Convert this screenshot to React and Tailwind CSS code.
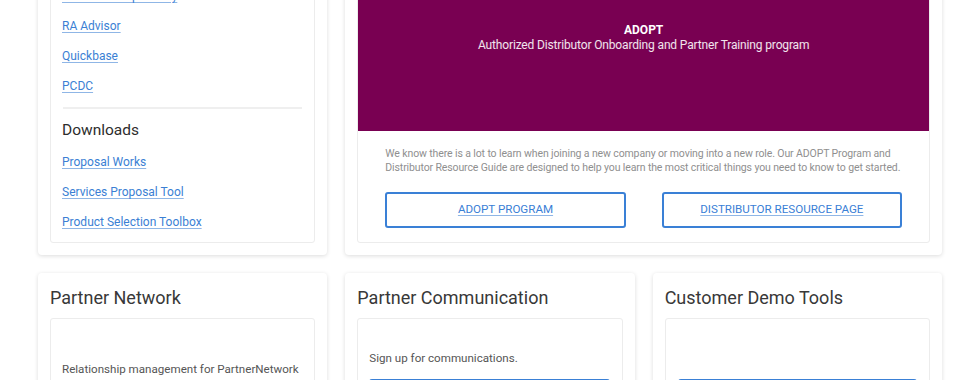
import React from "react";

const font = { fontFamily: "Roboto, 'Liberation Sans', sans-serif" };

function LinkRow({ children }) {
  return (
    <div className="h-[30px] flex items-center pl-[11px] pr-3">
      <a href="#" className="text-[12px] text-[#3b7fd4] underline decoration-[#8fb6e6] underline-offset-2 leading-none">
        {children}
      </a>
    </div>
  );
}

function Card({ className = "", children }) {
  return (
    <div className={"bg-white rounded-[4px] shadow-[0_1px_4px_rgba(0,0,0,0.14)] p-3 " + className}>
      {children}
    </div>
  );
}

function Inner({ className = "", children }) {
  return (
    <div className={"bg-white rounded-[3px] border border-[#ececec] " + className}>{children}</div>
  );
}

const btn =
  "h-[36px] flex items-center justify-center border-2 border-[#3a80d6] rounded-[3px] text-[11.6px] text-[#3a80d6] underline decoration-[#8fb6e6] underline-offset-2";

export default function App() {
  return (
    <div className="bg-white w-[980px] h-[380px] overflow-hidden" style={font}>
      <div className="px-[38px] -mt-[96px] grid grid-cols-3 gap-x-[18px] gap-y-[18px]">
        {/* Left card */}
        <Card>
          <Inner className="pt-2 pb-[5px]">
            <div className="pl-[11px] pr-3 h-[26px] flex items-center text-[15px] text-[#2d2d2d]">Tools</div>
            <LinkRow>Product Configurator</LinkRow>
            <LinkRow>Product Compatibility</LinkRow>
            <LinkRow>RA Advisor</LinkRow>
            <LinkRow>Quickbase</LinkRow>
            <LinkRow>PCDC</LinkRow>
            <div className="mx-3 mt-[6px] h-[2px] bg-[#efefef]" />
            <div className="pl-[11px] pr-3 pt-[9px] pb-[3px]">
              <div className="h-[26px] flex items-center text-[15.5px] text-[#2d2d2d]">Downloads</div>
            </div>
            <LinkRow>Proposal Works</LinkRow>
            <LinkRow>Services Proposal Tool</LinkRow>
            <LinkRow>Product Selection Toolbox</LinkRow>
          </Inner>
        </Card>

        {/* Middle wide card */}
        <Card className="col-span-2 flex flex-col">
          <Inner className="flex-1 flex flex-col overflow-hidden">
            <div className="flex-1 bg-[#790052] pt-[106px] text-center text-white">
              <div className="text-[12px] font-bold leading-[15px]">ADOPT</div>
              <div className="text-[12px] tracking-[-0.15px] leading-[15px] text-white/90">
                Authorized Distributor Onboarding and Partner Training program
              </div>
            </div>
            <div className="px-[27px] pt-[16px] pb-[14px]">
              <p className="text-[10.5px] tracking-[-0.12px] leading-[14px] text-[#8f8f8f] whitespace-nowrap">
                We know there is a lot to learn when joining a new company or moving into a new role. Our ADOPT Program and
                <br />
                Distributor Resource Guide are designed to help you learn the most critical things you need to know to get started.
              </p>
              <div className="mt-[17px] grid grid-cols-2 gap-x-[36px]">
                <a href="#" className={btn}>ADOPT PROGRAM</a>
                <a href="#" className={btn}>DISTRIBUTOR RESOURCE PAGE</a>
              </div>
            </div>
          </Inner>
        </Card>

        {/* Bottom row */}
        <Card>
          <div className="h-[24px] flex items-center text-[18px] text-[#383838]">Partner Network</div>
          <Inner className="mt-[9px] pl-[11px] pr-2 pt-[41px] pb-3">
            <div className="h-[20px] flex items-center text-[11.6px] text-[#555] whitespace-nowrap">
              Relationship management for PartnerNetwork
            </div>
            <div className="mt-[9px] h-[34px] rounded-[3px] bg-[#3a80d6]" />
          </Inner>
        </Card>
        <Card>
          <div className="h-[24px] flex items-center text-[18px] text-[#383838]">Partner Communication</div>
          <Inner className="mt-[9px] pl-[11px] pr-3 pt-[30px] pb-3">
            <div className="h-[20px] flex items-center text-[11.6px] text-[#555]">Sign up for communications.</div>
            <div className="mt-[10px] h-[34px] rounded-[3px] bg-[#3a80d6]" />
          </Inner>
        </Card>
        <Card>
          <div className="h-[24px] flex items-center text-[18px] text-[#383838]">Customer Demo Tools</div>
          <Inner className="mt-[9px] px-3 pt-[60px] pb-3">
            <div className="h-[34px] rounded-[3px] bg-[#3a80d6]" />
          </Inner>
        </Card>
      </div>
    </div>
  );
}
